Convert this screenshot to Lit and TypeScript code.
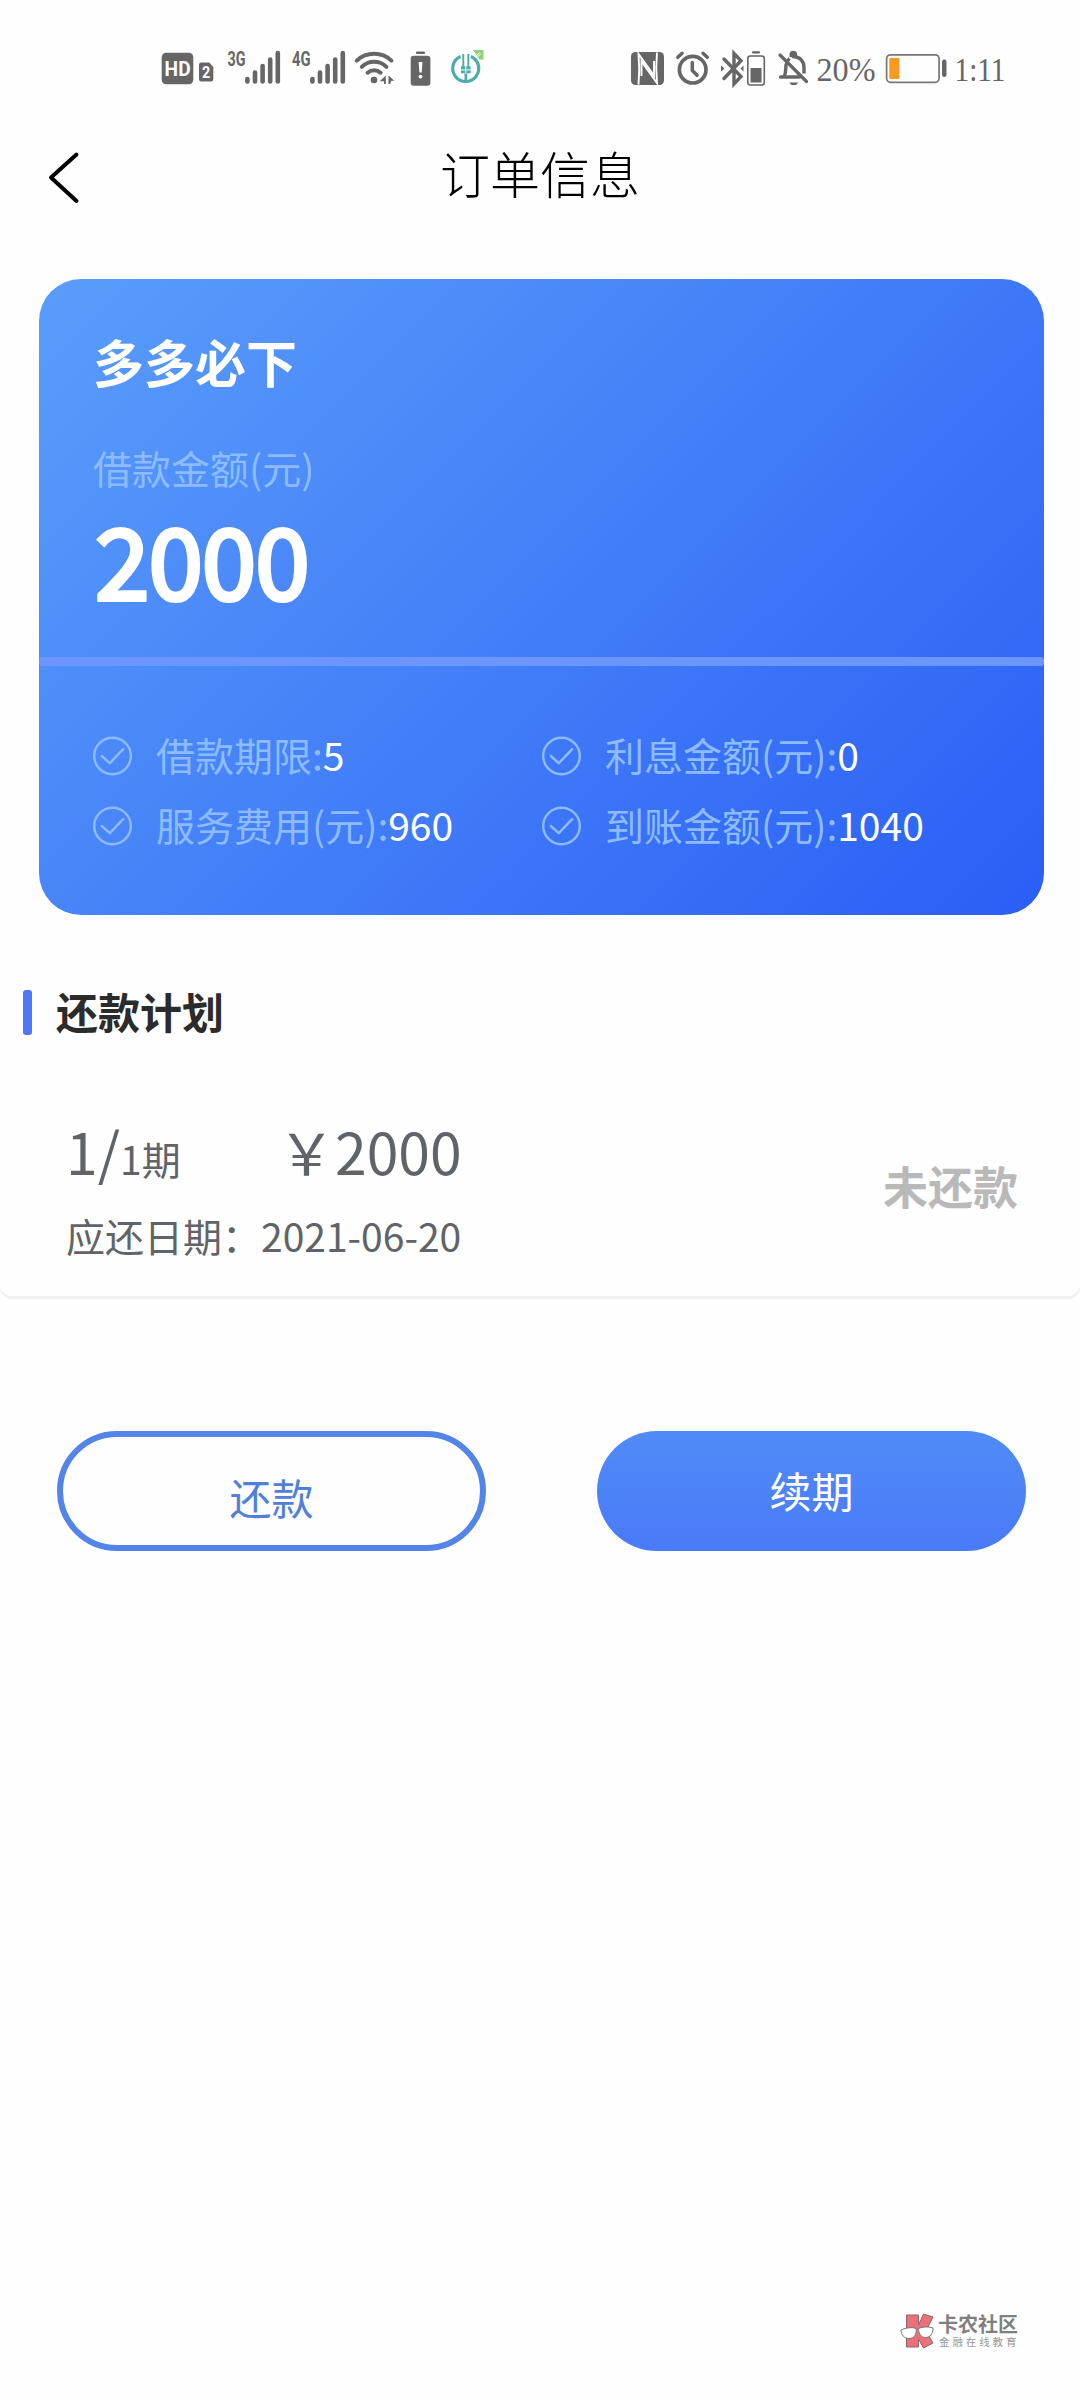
import { LitElement, html, svg, css } from "lit";
import { customElement, property } from "lit/decorators.js";

const fontStack = css`"Noto Sans CJK SC", "Noto Sans", sans-serif`;

const signalBars = (x: number) =>
  [0, 1, 2, 3, 4].map(
    (i) => svg`<line x1=${x + i * 7.6} x2=${x + i * 7.6} y1=${79 - i * 6.5} y2="81.4"></line>`
  );

@customElement("status-bar")
class StatusBar extends LitElement {
  static styles = css`
    :host {
      display: flex;
      align-items: center;
      height: 100px;
      padding: 40px 0 0 150px;
      box-sizing: border-box;
    }
    svg {
      display: block;
      flex: none;
    }
    .gap {
      width: 130px;
      flex: none;
    }
    .txt {
      font-family: "Liberation Serif", serif;
    }
    .sans {
      font-family: Roboto, "Liberation Sans", sans-serif;
      font-weight: 700;
    }
  `;

  render() {
    return html`
      <svg width="340" height="60" viewBox="150 40 340 60" fill="#666">
        <rect x="161.7" y="52.7" width="31.6" height="31.6" rx="4.5"></rect>
        <text class="sans" x="164.6" y="75.8" font-size="20" textLength="26" lengthAdjust="spacingAndGlyphs" fill="#fff">HD</text>
        <path d="M201.2 62.5h8.1l4 4.5v12.3a2.2 2.2 0 0 1-2.2 2.2h-9.900a2.200 2.200 0 0 1-2.200-2.200V64.700a2.200 2.200 0 0 1 2.200-2.200z"></path>
        <text class="sans" x="202" y="78.300" font-size="16.500" textLength="8.200" lengthAdjust="spacingAndGlyphs" fill="#fff">2</text>
        <text class="sans" x="227.500" y="65.500" font-size="19.500" textLength="18" lengthAdjust="spacingAndGlyphs">3G</text>
        <text class="sans" x="292" y="65.500" font-size="19.500" textLength="18.500" lengthAdjust="spacingAndGlyphs">4G</text>
        <g stroke="#666" stroke-width="4.600" stroke-linecap="round">
          ${signalBars(247.4)} ${signalBars(312.4)}
        </g>
        <g fill="none" stroke="#666" stroke-width="4" stroke-linecap="round">
          <path d="M356.800 60.600a25.500 25.500 0 0 1 34.600 0"></path>
          <path d="M361.800 66.900a17.500 17.500 0 0 1 24.600 0"></path>
          <path d="M367.600 72.700a10 10 0 0 1 13 0"></path>
        </g>
        <circle cx="374" cy="80" r="3.300"></circle>
        <path d="M385.800 75.500v8.500h-1.800v-2.700h-4.300zM388.500 75.500l5.800 5.300h-3l-1.200 3.200h-1.600z"></path>
        <rect x="416" y="51.600" width="9" height="2.300" rx="1"></rect>
        <rect x="410.700" y="55.700" width="19.700" height="30" rx="3"></rect>
        <path d="M418.700 62h3.700l-.7 10.500h-2.300z" fill="#fff"></path>
        <circle cx="420.500" cy="76.600" r="1.900" fill="#fff"></circle>
        <g fill="none" stroke="#4dada6">
          <path d="M460.500 56.500a13 13 0 1 0 10.400 0" stroke-width="3.200"></path>
          <path d="M463.300 54v13M468.300 54v13" stroke-width="1.900"></path>
          <path d="M465.800 73v9" stroke-width="2.600"></path>
        </g>
        <rect x="461" y="66.300" width="9.600" height="7" fill="#4dada6"></rect>
        <path d="M461 69.900h9.600M465.800 66v8" stroke="#fff" stroke-width="1"></path>
        <path d="M473 50h10.500v9.500h-4z" fill="#8ed27b"></path>
        <path d="M477 55l3-2.500m-2.200 4 3-2.500" stroke="#fff" stroke-width="1"></path>
      </svg>
      <div class="gap"></div>
      <svg width="195" height="60" viewBox="620 40 195 60" fill="#666">
        <rect x="631" y="52" width="33" height="33" rx="4.500"></rect>
        <path d="M638.500 84.500c1-10 1-20 0-30.500l15.500 21.500V61M657 52.500c-1 10-1 20 0 30.500l-15.500-21.500V76" fill="none" stroke="#fff" stroke-width="1.900"></path>
        <g fill="none" stroke="#666">
          <circle cx="692.700" cy="69.700" r="13.300" stroke-width="3.700"></circle>
          <path d="M692.300 62.500v8l4.800 4.800" stroke-width="3.500" stroke-linecap="round" stroke-linejoin="round"></path>
          <path d="M677.800 57.300l4.300-4M707.300 57.300l-4.300-4" stroke-width="3.500" stroke-linecap="round"></path>
          <path d="M724 59l17 17.500-7 7.500V53.500l7 7.200L724 78.500" stroke-width="3.400" stroke-linecap="round"></path>
          <rect x="747.800" y="56" width="16.500" height="29" rx="2.500" stroke-width="1.600"></rect>
          <path d="M784 77c2.400-5 1.600-9 2-12 .6-3 1.700-5 3.500-6.500M792 56.500c8-.5 12 5 12 11v6" stroke-width="3.400"></path>
          <path d="M780.500 77h19" stroke-width="3.400" stroke-linecap="round"></path>
          <path d="M780 55l26.500 26.500" stroke-width="3.200" stroke-linecap="round"></path>
        </g>
        <path d="M721 65.500l3.500 3-3.500 3zM743.500 65.500l-3 3 3 3z"></path>
        <rect x="752" y="51.200" width="8" height="2.400" rx="1"></rect>
        <rect x="750.500" y="68" width="11" height="14.500"></rect>
        <path d="M789.500 57v-2.500a3.800 3.800 0 0 1 7.600 0V58zM789.500 82.500h8.500a4.300 3 0 0 1-8.500 0z"></path>
      </svg>
      <svg width="220" height="60" viewBox="815 40 220 60" fill="#666">
        <text class="txt" x="816.500" y="81" font-size="34" textLength="59" lengthAdjust="spacingAndGlyphs">20%</text>
        <rect x="886.600" y="54.800" width="52.500" height="27.500" rx="4" fill="none" stroke="#777" stroke-width="1.700"></rect>
        <rect x="889.300" y="58" width="10" height="21" rx="1.200" fill="#f79a1f"></rect>
        <rect x="942" y="59.500" width="4.500" height="17.500" rx="2.200"></rect>
        <text class="txt" x="954.500" y="81" font-size="34" textLength="51" lengthAdjust="spacingAndGlyphs">1:11</text>
      </svg>
    `;
  }
}

@customElement("info-item")
class InfoItem extends LitElement {
  @property() label = "";
  @property() value = "";

  static styles = css`
    :host {
      display: flex;
      align-items: flex-start;
      height: 70px;
      font-size: 39px;
      line-height: 66px;
      white-space: nowrap;
    }
    svg {
      flex: none;
      margin: 15px 24px 0 0;
    }
    .label {
      color: #8cbcff;
    }
    .value {
      color: #fff;
    }
  `;

  render() {
    return html`
      <svg width="40" height="40" viewBox="0 0 40 40" fill="none" stroke="#8cbcff" stroke-width="2.400">
        <circle cx="20.500" cy="20" r="18.300"></circle>
        <path d="M9.800 20l8 7.200 13.400-14" stroke-linecap="round" stroke-linejoin="round"></path>
      </svg>
      <span class="label">${this.label}:</span><span class="value">${this.value}</span>
    `;
  }
}

@customElement("app-root")
class AppRoot extends LitElement {
  private details = [
    ["借款期限", "5"],
    ["利息金额(元)", "0"],
    ["服务费用(元)", "960"],
    ["到账金额(元)", "1040"],
  ];

  static styles = css`
    :host {
      display: flex;
      flex-direction: column;
      width: 1080px;
      height: 2400px;
      background: #fefefe;
      font-family: ${fontStack};
      overflow: hidden;
    }
    .nav {
      display: grid;
      grid-template-columns: 130px 1fr 130px;
      align-items: center;
      height: 146px;
      margin-bottom: 33px;
    }
    .back {
      display: block;
      margin: 8px 0 0 44px;
    }
    .title {
      text-align: center;
      font-size: 50px;
      line-height: 144px;
      height: 146px;
      font-weight: 300;
      color: #000;
    }
    .card {
      width: 1005px;
      height: 636px;
      margin-left: 39px;
      flex: none;
      border-radius: 42px;
      background: linear-gradient(135deg, #5a9dfb 0%, #4480f8 48%, #2a5ef6 100%);
      overflow: hidden;
      color: #fff;
    }
    .summary {
      height: 378px;
      padding: 46px 54px 0;
      box-sizing: border-box;
    }
    .name {
      font-size: 51px;
      line-height: 72px;
      font-weight: 700;
    }
    .caption {
      margin-top: 40px;
      font-size: 39px;
      line-height: 60px;
      color: #8cbcff;
    }
    .amount {
      margin: 10px 0 0 2px;
      font-size: 98px;
      line-height: 100px;
      letter-spacing: -1px;
      -webkit-text-stroke: 4px #fff;
    }
    .divider {
      height: 9px;
      border-radius: 3px;
      background: #6c96ff;
    }
    .details {
      display: grid;
      grid-template-columns: 449px 1fr;
      padding: 55px 0 0 53px;
    }
    .section {
      display: flex;
      align-items: center;
      gap: 24px;
      height: 60px;
      margin: 67px 0 0 23px;
    }
    .mark {
      width: 9px;
      height: 45px;
      border-radius: 3px;
      background: #5076fa;
    }
    .heading {
      font-size: 42px;
      line-height: 58px;
      margin-top: -2px;
      font-weight: 700;
      color: #2b2b2b;
    }
    .plan {
      display: flex;
      justify-content: space-between;
      height: 214px;
      margin-top: 40px;
      padding: 0 62px 0 66px;
      border-radius: 0 0 12px 12px;
      box-shadow: 0 3px 0 #f0f0f0;
      color: #606468;
    }
    .term {
      display: flex;
      align-items: baseline;
      height: 84px;
      padding-top: 26px;
      box-sizing: border-box;
      font-size: 57px;
      line-height: 84px;
    }
    .period {
      width: 212px;
    }
    .small {
      font-size: 39px;
    }
    .due {
      margin-top: 39px;
      font-size: 39px;
      line-height: 60px;
    }
    .state {
      margin-top: 72px;
      font-size: 45px;
      line-height: 64px;
      font-weight: 700;
      color: #b9b9b9;
    }
    .actions {
      display: flex;
      gap: 111px;
      margin: 135px 0 0 57px;
    }
    .btn {
      width: 429px;
      height: 120px;
      box-sizing: border-box;
      border-radius: 60px;
      text-align: center;
      font-size: 42px;
    }
    .outline {
      border: 6px solid #5384e9;
      color: #5080db;
      line-height: 119px;
    }
    .filled {
      background: linear-gradient(#508bf7, #497af8);
      color: #fff;
      line-height: 118px;
    }
    .brand {
      display: flex;
      align-items: center;
      gap: 3px;
      margin: auto 62px 50px auto;
    }
    .brand-name {
      font-size: 20px;
      line-height: 22px;
      font-weight: 700;
      color: #808080;
    }
    .brand-sub {
      font-size: 10.500px;
      line-height: 14px;
      letter-spacing: 2.900px;
      margin: 0 -3px 1px 1px;
      color: #999;
    }
  `;

  render() {
    return html`
      <status-bar></status-bar>
      <div class="nav">
        <svg class="back" width="40" height="60" viewBox="44 147 40 60" fill="none" stroke="#000" stroke-width="4" stroke-linecap="round" stroke-linejoin="round">
          <path d="M76.500 154.500L51 177.500 76.500 201"></path>
        </svg>
        <div class="title">订单信息</div>
      </div>
      <div class="card">
        <div class="summary">
          <div class="name">多多必下</div>
          <div class="caption">借款金额(元)</div>
          <div class="amount">2000</div>
        </div>
        <div class="divider"></div>
        <div class="details">
          ${this.details.map(([label, value]) => html`<info-item .label=${label} .value=${value}></info-item>`)}
        </div>
      </div>
      <div class="section">
        <div class="mark"></div>
        <div class="heading">还款计划</div>
      </div>
      <div class="plan">
        <div>
          <div class="term">
            <div class="period">1/<span class="small">1期</span></div>
            <div>￥2000</div>
          </div>
          <div class="due">应还日期：2021-06-20</div>
        </div>
        <div class="state">未还款</div>
      </div>
      <div class="actions">
        <div class="btn outline">还款</div>
        <div class="btn filled">续期</div>
      </div>
      <div class="brand">
        <svg width="35" height="38" viewBox="900 2311 35 38">
          <path d="M906.500 2314h12v10l5-11 9.500 3-7 14 7 12-9.500 5-5-9v8h-12z" fill="#ec707a" stroke="#8d6568" stroke-width="1"></path>
          <path d="M901 2329c5-2.500 12-3 15-1.500 1 6-2 10-7 10s-8-4-8-8.500zM918.500 2327.500c4-2 11-2 14.500-.5 0 6-3 9.500-7.500 9.500s-7-4-7-9z" fill="#fff" stroke="#777" stroke-width="1"></path>
        </svg>
        <div>
          <div class="brand-name">卡农社区</div>
          <div class="brand-sub">金融在线教育</div>
        </div>
      </div>
    `;
  }
}
